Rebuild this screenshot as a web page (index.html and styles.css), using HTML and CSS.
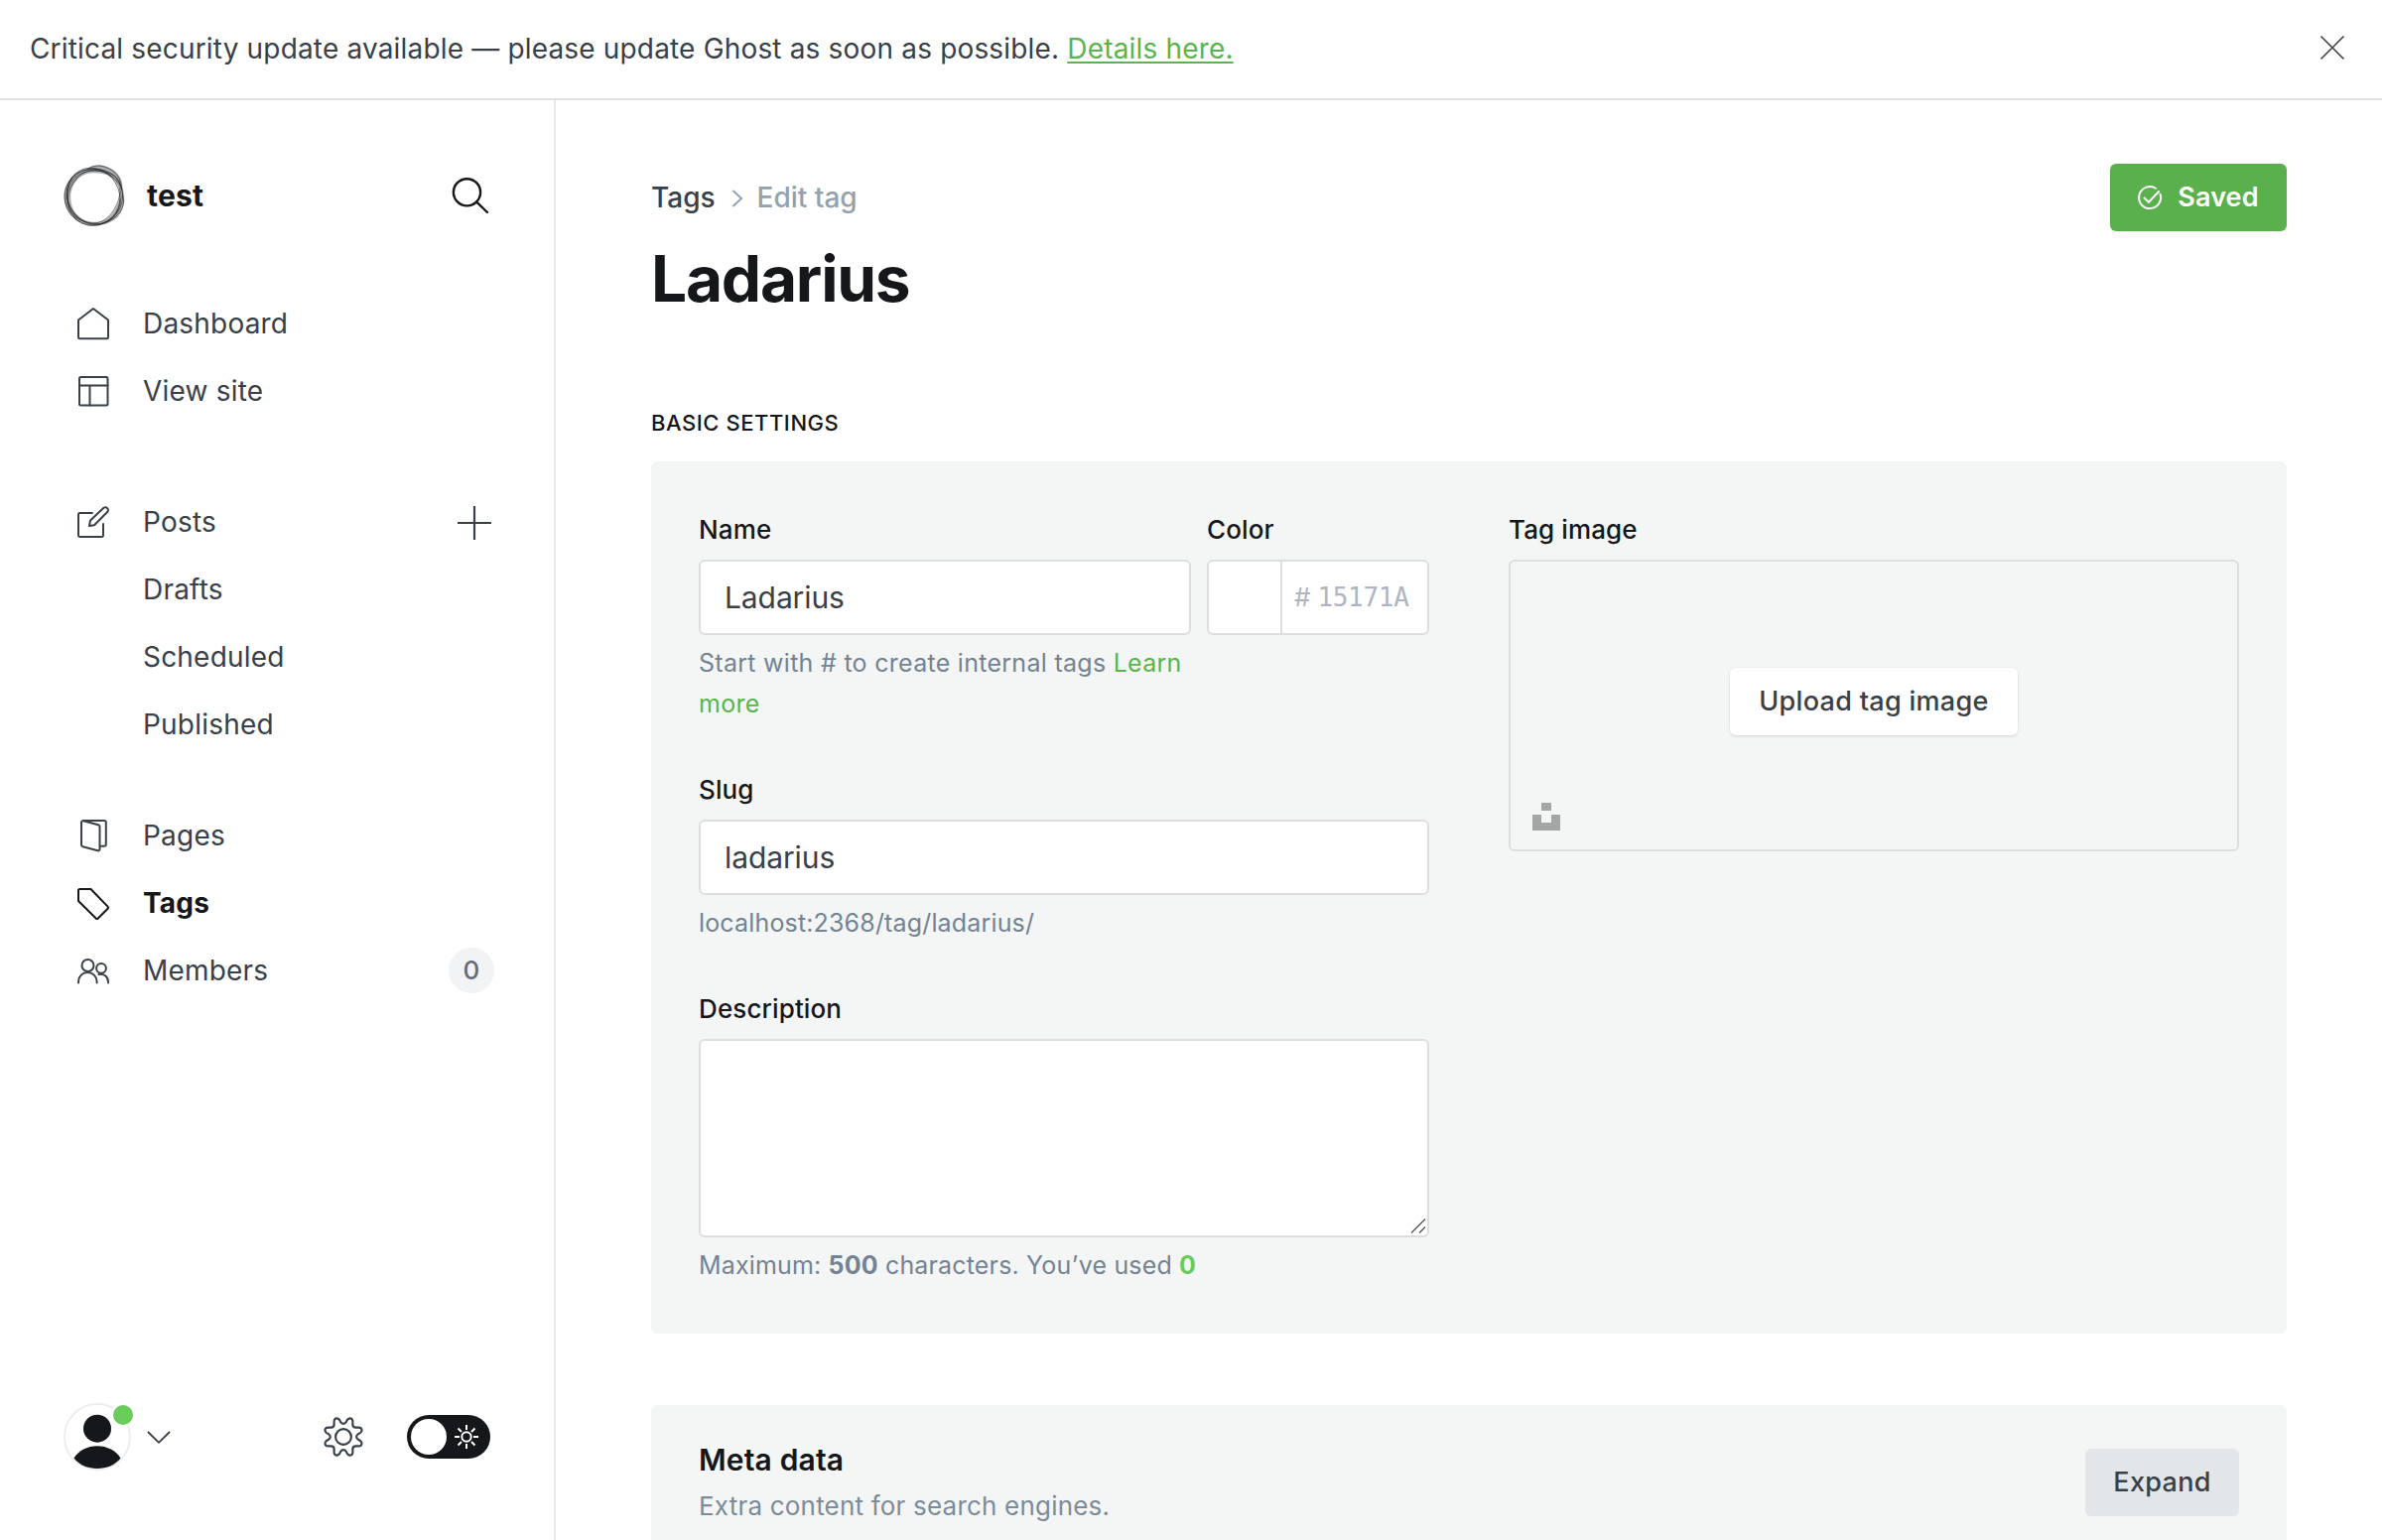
FILE: index.html
```html
<!DOCTYPE html>
<html lang="en">
<head>
<meta charset="utf-8">
<title>Edit tag - Ladarius</title>
<link rel="stylesheet" href="styles.css">
</head>
<body>
<div class="app">
  <header class="banner">
    <p class="banner-text">Critical security update available — please update Ghost as soon as possible. <a class="banner-link" href="#">Details here.</a></p>
    <svg class="banner-close" viewBox="0 0 24 24"><path d="M.5.5l23 23M23.5.5l-23 23"/></svg>
  </header>
  <div class="body">
    <aside class="sidebar">
      <div class="site">
        <svg class="site-logo" viewBox="0 0 60 60">
          <path class="ring-fill" fill-rule="evenodd" d="M23 4C9 7 0 18 0.500 32c1 15 13 27 30 27 7 0 12-1 17-4 6-3 9-8 11-15 2-7 0-12-1-19 0-9-7-16-15-19-7-3-13-2-19 2zM29 8C15 8 7 20 7 32c0 14 10 24 24 24 12 0 18-9 22-18 4-10 5-12 1-19C49 11 40 8 29 8z"/>
          <g class="ring-line">
            <ellipse cx="28.500" cy="31.500" rx="27.500" ry="27.500"/>
            <ellipse cx="31" cy="32" rx="28" ry="26" transform="rotate(-55 31 32)"/>
            <ellipse cx="30" cy="31" rx="28" ry="25" transform="rotate(60 30 30)"/>
            <path d="M23 4.500C31-2 45 1 53 11c4 6 3 13 5 20 3 10-5 21-16 25-7 3-15 3-21 0C7 50 2 42 3 30 4 14 14 3 30 5c13 2 22 8 27 19"/>
            <path d="M7 18C16 3 34 5 44 8c13 4 13 16 9 28-4 11-12 20-22 21C17 58 8 48 5 38 3 31 3 25 7 18z"/>
          </g>
        </svg>
        <span class="site-name">test</span>
        <svg class="search" viewBox="0 0 36 36"><circle cx="14.500" cy="14.800" r="13.600"/><path d="M24.300 24.600L35 35"/></svg>
      </div>
      <nav class="nav">
        <a class="nav-item"><svg class="icon" viewBox="0 0 32 32"><path d="M1 12.500L16 1l15 11.500V30a1.200 1.200 0 0 1-1.200 1.200H2.200A1.200 1.200 0 0 1 1 30z"/></svg><span>Dashboard</span></a>
        <a class="nav-item"><svg class="icon" viewBox="0 0 32 32"><rect x="2" y="2" width="28.500" height="28.500" rx="1.500"/><path d="M2 10.500h28.500M12.500 10.500v20"/></svg><span>View site</span></a>
        <a class="nav-item nav-gap-lg"><svg class="icon" viewBox="0 0 32 32"><path d="M15 7H2.500A1.500 1.500 0 0 0 1 8.500v21A1.500 1.500 0 0 0 2.500 31h22a1.500 1.500 0 0 0 1.500-1.500V18M12 20l1-5.500L26.500 1.800a2.800 2.800 0 0 1 3.900 3.900L17 19.200z"/></svg><span>Posts</span><svg class="plus" viewBox="0 0 34 34"><path d="M17 0v34M0 17h34"/></svg></a>
        <a class="nav-item nav-sub"><span>Drafts</span></a>
        <a class="nav-item nav-sub"><span>Scheduled</span></a>
        <a class="nav-item nav-sub"><span>Published</span></a>
        <a class="nav-item nav-gap"><svg class="icon" viewBox="0 0 32 32"><path d="M5.500 1H27a1.800 1.800 0 0 1 1.800 1.800V25A1.800 1.800 0 0 1 27 26.800h-4M4 2.800A1.500 1.500 0 0 1 6 1.300l15 4a2 2 0 0 1 1.500 1.900V30a1.500 1.500 0 0 1-2 1.300l-15-4A2 2 0 0 1 4 25.500z"/></svg><span>Pages</span></a>
        <a class="nav-item active"><svg class="icon" viewBox="0 0 32 32"><path d="M2.500 2h11L30.600 19.600a1.500 1.500 0 0 1 0 2.100l-9.800 9.800a1.500 1.500 0 0 1-2.100 0L1 14V3.500A1.500 1.500 0 0 1 2.500 2z"/></svg><span>Tags</span></a>
        <a class="nav-item"><svg class="icon" viewBox="0 0 32 32"><circle cx="10.500" cy="11" r="6"/><circle cx="24" cy="13.800" r="4.900"/><path d="M1 28.500v-1.300a9.300 9.300 0 0 1 18.600 0v1.300M21.500 20a7.500 7.500 0 0 1 9.500 7.200v1.300"/></svg><span>Members</span><span class="count">0</span></a>
      </nav>
      <footer class="user-bar">
        <div class="avatar">
          <svg class="avatar-img" viewBox="0 0 68 68"><circle class="avatar-ring" cx="34" cy="34" r="33"/><circle cx="34" cy="25.700" r="14"/><path d="M10.500 55.500C15 48 24 43.300 34 43.300S53 48 57.500 55.500C52 62.500 43.500 66 34 66s-18-3.500-23.500-10.500z"/></svg>
          <i class="status"></i>
        </div>
        <svg class="chevron-down" viewBox="0 0 24 13"><path d="M1 1l11 10.800L23 1"/></svg>
        <svg class="gear" viewBox="-21 -21 42 42"><circle r="8.300"/><path d="M-3-15.800 C-1.500-13.200 1.500-13.200 3-15.800 C4-19 7-20.400 9-18.800 C10.500-17.500 9.800-15 9.800-13 Q9.800-9.800 13-9.800 C15-9.800 17.500-10.500 18.800-9 C20.400-7 19-4 15.800-3 C13.200-1.500 13.200 1.500 15.800 3 C19 4 20.400 7 18.800 9 C17.500 10.500 15 9.800 13 9.800 Q9.800 9.800 9.800 13 C9.800 15 10.500 17.500 9 18.800 C7 20.400 4 19 3 15.800 C1.500 13.200-1.500 13.200-3 15.800 C-4 19-7 20.400-9 18.800 C-10.500 17.500-9.800 15-9.800 13 Q-9.800 9.800-13 9.800 C-15 9.800-17.500 10.500-18.800 9 C-20.400 7-19 4-15.800 3 C-13.200 1.500-13.200-1.500-15.800-3 C-19-4-20.400-7-18.800-9 C-17.500-10.500-15-9.800-13-9.800 Q-9.800-9.800-9.800-13 C-9.800-15-10.500-17.500-9-18.800 C-7-20.400-4-19-3-15.800z"/></svg>
        <div class="toggle">
          <i class="knob"></i>
          <svg class="sun" viewBox="-12 -12 24 24"><circle r="4.700"/><path d="M0-12v5M0 7v5M-12 0h5M7 0h5M-8.500-8.500l3.500 3.500M5 5l3.500 3.500M-8.500 8.500l3.500-3.500M5-5l3.500-3.500"/></svg>
        </div>
      </footer>
    </aside>
    <main class="main">
      <div class="head">
        <div>
          <div class="crumbs"><a class="crumb">Tags</a><svg class="crumb-sep" viewBox="0 0 12 18"><path d="M1.500 1l8.500 8-8.500 8"/></svg><span class="crumb-current">Edit tag</span></div>
          <h1 class="title">Ladarius</h1>
        </div>
        <button class="btn btn-green"><svg class="check" viewBox="0 0 24 24"><path d="M18.700 3.300A11 11 0 1 0 22.300 8M6 12l5 4.800L21.600 5.500"/></svg><span>Saved</span></button>
      </div>
      <h4 class="section-label">BASIC SETTINGS</h4>
      <section class="panel form">
        <div class="col">
          <div class="row">
            <div class="field name-field">
              <label class="label">Name</label>
              <div class="input">Ladarius</div>
              <p class="help help-name">Start with # to create internal tags <a class="help-link">Learn more</a></p>
            </div>
            <div class="field color-field">
              <label class="label">Color</label>
              <div class="input color-input"><span class="swatch"></span><span class="hash">#</span><span class="hex">15171A</span></div>
            </div>
          </div>
          <div class="field slug-field">
            <label class="label">Slug</label>
            <div class="input">ladarius</div>
            <p class="help">localhost:2368/tag/ladarius/</p>
          </div>
          <div class="field">
            <label class="label">Description</label>
            <div class="input textarea"><svg class="grip" viewBox="0 0 16 15"><path d="M1 14.500L15 .5M9 14.500l6-6"/></svg></div>
            <p class="help">Maximum: <b>500</b> characters. You’ve used <b class="used">0</b></p>
          </div>
        </div>
        <div class="col">
          <label class="label">Tag image</label>
          <div class="upload">
            <button class="btn btn-white">Upload tag image</button>
            <svg class="unsplash" viewBox="0 0 28 28"><path d="M9 0h10v8H9zM0 12h9v8h10v-8h9v16H0z"/></svg>
          </div>
        </div>
      </section>
      <section class="panel meta">
        <div>
          <h4 class="meta-title">Meta data</h4>
          <p class="meta-text">Extra content for search engines.</p>
        </div>
        <button class="btn btn-grey">Expand</button>
      </section>
    </main>
  </div>
</div>
</body>
</html>
```
FILE: styles.css
```css
* { box-sizing: border-box; }
body { margin: 0; background: #fff; color: #394047; font: 400 28px/44px Inter, "Liberation Sans", sans-serif; letter-spacing: .2px; }
h1, h4, p { margin: 0; }
svg { fill: none; stroke: currentColor; flex: none; overflow: visible; }
button { font: inherit; letter-spacing: inherit; border: 0; margin: 0; }
.app { display: flex; flex-direction: column; height: 1552px; overflow: hidden; }

.banner { display: flex; align-items: center; justify-content: space-between; height: 101px; flex: none; padding: 0 38px 3px 30px; border-bottom: 2px solid #dfe1e1; }
.banner-text { padding-top: 2px; letter-spacing: .17px; }
.banner-link { color: #5ab44c; text-decoration: underline; text-decoration-thickness: 2px; text-underline-offset: 3px; }
.banner-close { width: 24px; height: 24px; stroke-width: 1.6; }

.body { display: flex; flex: 1; min-height: 0; }
.sidebar { display: flex; flex-direction: column; width: 560px; flex: none; border-right: 2px solid #e5e7e9; padding: 64px 62px 69px 64px; }
.site { display: flex; align-items: center; height: 64px; color: #15171a; }
.site-logo { width: 62px; height: 62px; }
.ring-fill { fill: #15171a; fill-opacity: .35; stroke: none; }
.ring-line { stroke: #15171a; stroke-opacity: .6; stroke-width: .9; }
.site-name { margin-left: 22px; font-size: 30px; font-weight: 700; letter-spacing: .2px; flex: 1; }
.search { width: 36px; height: 36px; stroke-width: 2.4; stroke-linecap: round; margin-right: 4px; }

.nav { padding: 63px 0 0 14px; flex: 1; }
.nav-item { display: flex; align-items: center; height: 68px; }
.nav-item .icon { width: 32px; height: 32px; margin-right: 34px; stroke-width: 2; stroke-linejoin: round; stroke-linecap: round; }
.nav-gap-lg { margin-top: 64px; }
.nav-gap { margin-top: 44px; }
.nav-sub { padding-left: 66px; }
.active { color: #15171a; font-weight: 700; }
.plus { width: 34px; height: 34px; margin: 1px 1px 0 auto; stroke-width: 2.2; }
.count { width: 46px; height: 46px; margin-left: auto; margin-right: -2px; border-radius: 50%; background: #f1f3f5; color: #626d79; font-size: 26px; font-weight: 500; line-height: 46px; text-align: center; letter-spacing: 0; }

.user-bar { display: flex; align-items: center; height: 70px; }
.avatar { position: relative; width: 68px; height: 68px; }
.avatar-img { display: block; width: 68px; height: 68px; fill: #15171a; stroke: none; }
.avatar-img .avatar-ring { fill: #fff; stroke: #ebeef0; stroke-width: 2; }
.status { position: absolute; left: 48px; top: 0; width: 24px; height: 24px; border: 2px solid #fff; border-radius: 50%; background: #69cc5b; }
.chevron-down { width: 24px; height: 13px; margin: 1px 0 0 16px; stroke-width: 1.8; }
.gear { width: 40px; height: 40px; margin-left: auto; stroke-width: 2.3; }
.toggle { display: flex; align-items: center; justify-content: space-between; width: 84px; height: 44px; margin: 0 2px 0 44px; padding: 0 12px 0 4px; border-radius: 22px; background: #15171a; color: #fff; }
.knob { width: 36px; height: 36px; border-radius: 50%; background: #fff; }
.sun { width: 24px; height: 24px; stroke-width: 2; }

.main { flex: 1; padding: 64px 96px 0; }
.head { display: flex; justify-content: space-between; align-items: flex-start; height: 239px; }
.crumbs { display: flex; align-items: center; height: 68px; font-weight: 500; letter-spacing: 0; }
.crumb-sep { width: 12px; height: 18px; margin: 2px 14px 0 16px; color: #95a1ad; stroke-width: 2; }
.crumb-current { color: #95a1ad; }
.title { margin-top: 10px; color: #15171a; font-size: 64px; line-height: 76px; font-weight: 700; letter-spacing: -1.25px; }
.btn { display: flex; align-items: center; justify-content: center; height: 68px; border-radius: 6px; font-size: 27px; font-weight: 500; letter-spacing: .3px; color: #394047; }
.btn-green { width: 178px; background: #59b04d; color: #fff; font-weight: 600; letter-spacing: .1px; }
.check { width: 24px; height: 24px; margin-right: 16px; stroke-width: 2; }
.section-label { height: 61px; line-height: 44px; color: #15171a; font-size: 22px; font-weight: 500; letter-spacing: .55px; }

.panel { border-radius: 6px; background: #f4f6f6; padding: 0 48px; }
.form { display: grid; grid-template-columns: 736px 736px; column-gap: 80px; height: 879px; padding-top: 47px; }
.row { display: grid; grid-template-columns: 496px 224px; column-gap: 16px; height: 262px; }
.slug-field { height: 221px; }
.label { display: block; height: 52px; line-height: 44px; color: #15171a; font-size: 26px; font-weight: 500; letter-spacing: .12px; }
.input { height: 76px; border: 2px solid #dddfdf; border-radius: 6px; background: #fff; padding: 0 24px; font-size: 30px; line-height: 72px; letter-spacing: -.1px; }
.color-input { display: flex; padding: 0; color: #aeb5c0; }
.swatch { width: 74px; border-right: 2px solid #dddfdf; }
.hash { margin-left: 12px; font-size: 26px; }
.hex { margin-left: 7px; font: 26px/72px "DejaVu Sans Mono", monospace; letter-spacing: -.3px; }
.help { margin-top: 8px; color: #738393; font-size: 25px; line-height: 41px; letter-spacing: .16px; }
.help-name { letter-spacing: .28px; }
.help-link { color: #5ab44c; }
.textarea { display: flex; align-items: flex-end; justify-content: flex-end; height: 200px; padding: 0 1px 2px 0; }
.grip { width: 16px; height: 15px; stroke: #555; stroke-width: 1.4; }
.used { color: #69cc5b; }
.upload { position: relative; display: flex; align-items: center; justify-content: center; height: 294px; border: 2px solid #dddfdf; border-radius: 6px; }
.btn-white { width: 290px; margin-top: -8px; background: #fff; box-shadow: 0 1px 3px rgba(0,0,0,.14); }
.unsplash { position: absolute; left: 22px; bottom: 19px; width: 28px; height: 28px; fill: #a4a6a6; stroke: none; }
.meta { display: flex; justify-content: space-between; align-items: flex-start; height: 200px; margin-top: 72px; padding-top: 33px; }
.meta-title { color: #15171a; font-size: 30px; line-height: 44px; font-weight: 600; letter-spacing: .15px; }
.meta-text { margin-top: 2px; color: #7c8b9a; font-size: 26px; line-height: 46px; letter-spacing: .2px; }
.btn-grey { width: 155px; margin-top: 11px; background: #e2e6e9; }
```
